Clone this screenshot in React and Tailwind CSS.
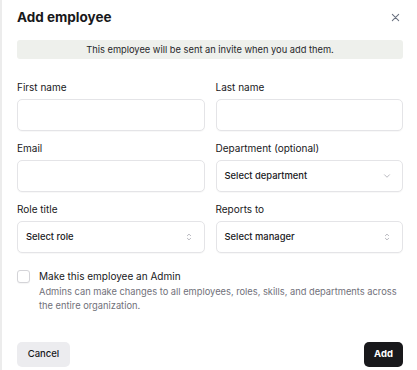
import React from "react";

function ChevronDown() {
  return (
    <svg width="10" height="10" viewBox="0 0 24 24" fill="none" stroke="#a1a1aa" strokeWidth="1.8" strokeLinecap="round" strokeLinejoin="round">
      <path d="M6 9l6 6 6-6" />
    </svg>
  );
}

function ChevronsUpDown() {
  return (
    <svg width="10" height="10" viewBox="0 0 24 24" fill="none" stroke="#a1a1aa" strokeWidth="1.8" strokeLinecap="round" strokeLinejoin="round">
      <path d="M8 9l4-4 4 4" />
      <path d="M8 15l4 4 4-4" />
    </svg>
  );
}

function Field({ label, children }) {
  return (
    <div className="flex flex-col">
      <label className="text-[10px] leading-[14px] text-[#18181b] mb-[5px]">{label}</label>
      {children}
    </div>
  );
}

function Input() {
  return <div className="h-[32px] rounded-[5px] border border-[#e4e4e7] bg-white shadow-[0_1px_1px_rgba(0,0,0,0.03)]" />;
}

function Select({ text, icon }) {
  return (
    <div className="h-[32px] rounded-[5px] border border-[#e4e4e7] bg-white flex items-center justify-between pl-[8px] pr-[10px] shadow-[0_1px_1px_rgba(0,0,0,0.03)]">
      <span className="text-[9.4px] text-[#18181b] font-medium">{text}</span>
      {icon === "down" ? <ChevronDown /> : <ChevronsUpDown />}
    </div>
  );
}

export default function App() {
  return (
    <div className="w-[417px] h-[370px] bg-white border-l-2 border-[#ececec] overflow-hidden" style={{ fontFamily: "Inter, 'Noto Sans', sans-serif" }}>
      <div className="pl-[15px] pr-[14px] pt-[6px]">
        <div className="flex items-center justify-between h-[22px]">
          <h1 className="text-[13.5px] font-bold text-[#18181b]">Add employee</h1>
          <svg width="9" height="9" viewBox="0 0 10 10" className="mr-[3px] mt-[1px]" stroke="#6b7280" strokeWidth="1.2" strokeLinecap="round">
            <path d="M1.5 1.5l7 7M8.5 1.5l-7 7" />
          </svg>
        </div>
        <div className="mt-[12px] h-[19px] rounded-[3px] bg-[#eef0ec] flex items-center justify-center text-[9.3px] text-[#27272a]">
          This employee will be sent an invite when you add them.
        </div>
        <div className="mt-[21px] grid grid-cols-2 gap-x-[11px] gap-y-[10px]">
          <Field label="First name"><Input /></Field>
          <Field label="Last name"><Input /></Field>
          <Field label="Email"><Input /></Field>
          <Field label="Department (optional)"><Select text="Select department" icon="down" /></Field>
          <Field label="Role title"><Select text="Select role" icon="updown" /></Field>
          <Field label="Reports to"><Select text="Select manager" icon="updown" /></Field>
        </div>
        <div className="mt-[16px] flex gap-[9px]">
          <div className="w-[13px] h-[13px] rounded-[3px] border border-[#d4d4d8] bg-white mt-[1px] shrink-0 shadow-[0_1px_1px_rgba(0,0,0,0.04)]" />
          <div>
            <div className="text-[10px] leading-[14px] text-[#18181b]">Make this employee an Admin</div>
            <div className="mt-[2px] text-[9.3px] leading-[14px] text-[#71717a]">
              Admins can make changes to all employees, roles, skills, and departments across the entire organization.
            </div>
          </div>
        </div>
        <div className="mt-[29px] flex items-center justify-between">
          <button className="h-[25px] w-[53px] rounded-[5px] bg-[#ececef] text-[9.5px] font-medium text-[#18181b]">Cancel</button>
          <button className="h-[25px] w-[39px] rounded-[5px] bg-[#18181b] text-[9.5px] font-bold text-white">Add</button>
        </div>
      </div>
    </div>
  );
}
